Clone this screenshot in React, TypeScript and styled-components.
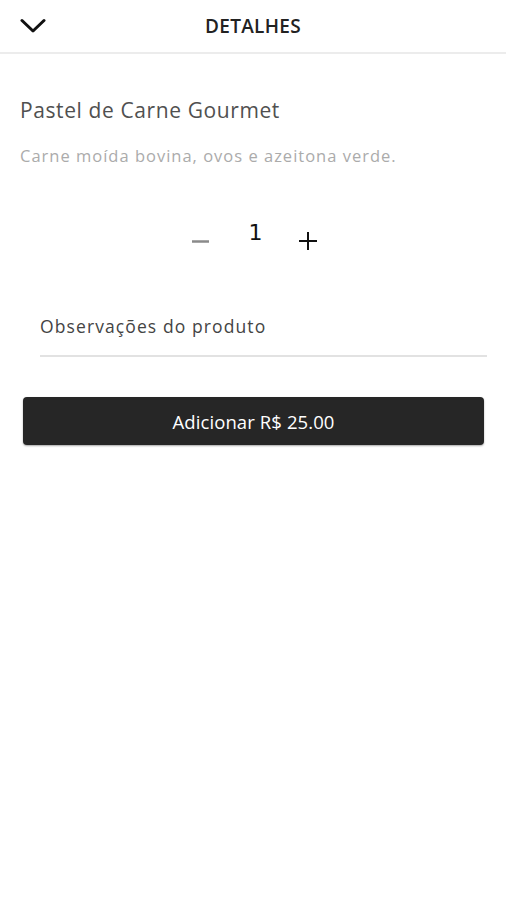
import styled, { createGlobalStyle } from "styled-components";

const GlobalStyle = createGlobalStyle`
  html, body {
    margin: 0;
    padding: 0;
    background: #fff;
  }
  body {
    font-family: "Open Sans", "Noto Sans", sans-serif;
  }
`;

const Page = styled.div`
  width: 506px;
  min-height: 900px;
  background: #fff;
`;

const Header = styled.header`
  height: 52px;
  display: grid;
  grid-template-columns: 60px 1fr 60px;
  align-items: center;
  border-bottom: 2px solid #ececec;
`;

const BackButton = styled.button`
  background: none;
  border: none;
  padding: 0 0 0 20px;
  display: flex;
  align-items: center;
  cursor: pointer;
`;

const Title = styled.h1`
  margin: 0;
  text-align: center;
  font-size: 19px;
  font-weight: 600;
  color: #222;
  letter-spacing: 0.3px;
`;

const Content = styled.main`
  padding: 42px 20px 0 20px;
`;

const ProductName = styled.h2`
  margin: 0;
  font-size: 21px;
  font-weight: 400;
  color: #505050;
  line-height: 28px;
  letter-spacing: 0.6px;
`;

const Description = styled.p`
  margin: 21px 0 0 0;
  font-size: 16.5px;
  color: #ababab;
  line-height: 22px;
  letter-spacing: 1px;
`;

const QuantityRow = styled.div`
  margin-top: 48px;
  display: flex;
  justify-content: center;
  align-items: center;
  gap: 38px;
  padding-left: 2px;
`;

const StepButton = styled.button<{ $muted?: boolean }>`
  background: none;
  border: none;
  padding: 0;
  width: 20px;
  height: 20px;
  display: flex;
  align-items: center;
  justify-content: center;
  margin-top: 16px;
  color: ${(p) => (p.$muted ? "#8a8a8a" : "#111")};
  cursor: pointer;
`;

const Quantity = styled.span`
  font-family: "DejaVu Sans", sans-serif;
  font-size: 22px;
  color: #111;
  line-height: 26px;
  margin-right: -3px;
`;

const NotesField = styled.div`
  margin: 63px 0 0 20px;
  width: 447px;
  border-bottom: 2px solid #e2e2e2;
  padding-bottom: 17px;
`;

const NotesInput = styled.input`
  width: 100%;
  border: none;
  outline: none;
  padding: 0;
  font-family: "Open Sans", sans-serif;
  font-size: 17.5px;
  letter-spacing: 1.1px;
  color: #444;
  background: transparent;

  &::placeholder {
    color: #444;
  }
`;

const AddButton = styled.button`
  margin: 40px 0 0 3px;
  width: 461px;
  height: 48px;
  border: none;
  border-radius: 4px;
  background: #262626;
  color: #fff;
  font-family: "Open Sans", sans-serif;
  font-size: 18.5px;
  letter-spacing: 0.1px;
  box-shadow: 0 1px 2px rgba(0, 0, 0, 0.35);
  cursor: pointer;
`;

const App = () => {
  return (
    <Page>
      <GlobalStyle />
      <Header>
        <BackButton aria-label="Voltar">
          <svg width="26" height="16" viewBox="0 0 26 16" fill="none">
            <path
              d="M2 2.5 L13 13 L24 2.5"
              stroke="#111"
              strokeWidth="3"
              strokeLinecap="round"
              strokeLinejoin="round"
            />
          </svg>
        </BackButton>
        <Title>DETALHES</Title>
        <div />
      </Header>

      <Content>
        <ProductName>Pastel de Carne Gourmet</ProductName>
        <Description>Carne moída bovina, ovos e azeitona verde.</Description>

        <QuantityRow>
          <StepButton $muted aria-label="Diminuir">
            <svg width="17" height="17" viewBox="0 0 17 17">
              <path d="M0 8.5 H17" stroke="currentColor" strokeWidth="2.5" />
            </svg>
          </StepButton>
          <Quantity>1</Quantity>
          <StepButton aria-label="Aumentar">
            <svg width="18" height="18" viewBox="0 0 18 18">
              <path d="M0 9 H18 M9 0 V18" stroke="currentColor" strokeWidth="2" />
            </svg>
          </StepButton>
        </QuantityRow>

        <NotesField>
          <NotesInput placeholder="Observações do produto" />
        </NotesField>

        <AddButton>Adicionar R$ 25.00</AddButton>
      </Content>
    </Page>
  );
};

export default App;
